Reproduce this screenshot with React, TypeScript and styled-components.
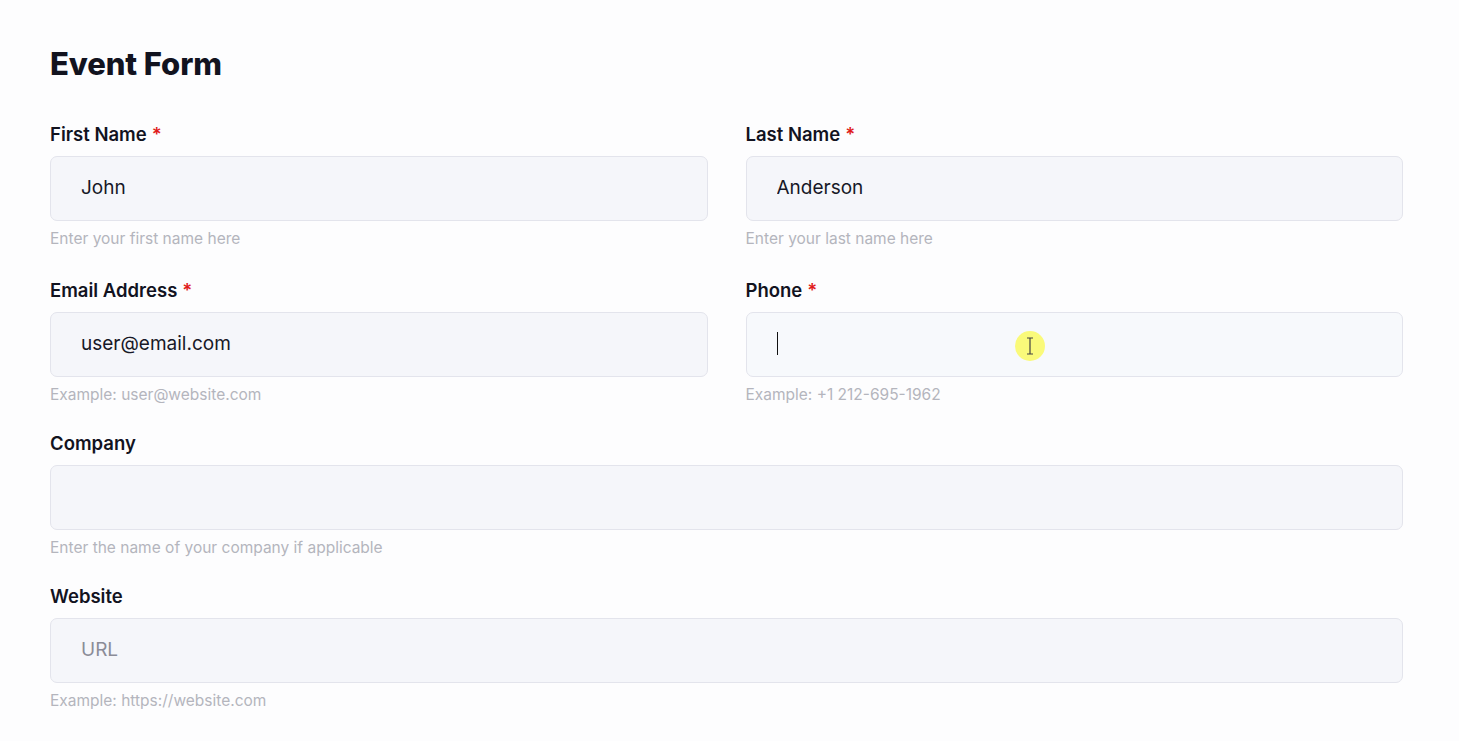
import React from 'react';
import styled, { createGlobalStyle } from 'styled-components';

const GlobalStyle = createGlobalStyle`
  html, body {
    margin: 0;
    padding: 0;
    background: #fdfdfe;
  }
  * {
    box-sizing: border-box;
  }
`;

const Page = styled.div`
  font-family: Inter, 'Noto Sans', sans-serif;
  padding: 46px 56px 30px 50px;
  color: #12131f;
  position: relative;
`;

const Title = styled.h1`
  font-size: 31px;
  line-height: 36px;
  font-weight: 800;
  margin: 0 0 40px;
  letter-spacing: -0.1px;
`;

const Grid = styled.div`
  display: grid;
  grid-template-columns: 1fr 1fr;
  column-gap: 38px;
  row-gap: 26px;
`;

const Field = styled.div<{ $wide?: boolean; $first?: boolean }>`
  display: flex;
  flex-direction: column;
  grid-column: ${(p) => (p.$wide ? '1 / -1' : 'auto')};
  padding-bottom: ${(p) => (p.$first ? '3px' : '0')};
`;

const Label = styled.label`
  font-size: 18.5px;
  line-height: 24px;
  font-weight: 600;
  margin-bottom: 10px;
`;

const Star = styled.span`
  color: #e01b1b;
  margin-left: 5px;
`;

const InputBox = styled.div<{ $focused?: boolean }>`
  position: relative;
  height: 65px;
  border: 1px solid #e3e4ec;
  border-radius: 7px;
  background: ${(p) => (p.$focused ? '#f7f9fc' : '#f5f6fa')};
  display: flex;
  align-items: center;
  padding: 0 30px;
`;

const Input = styled.input`
  border: none;
  outline: none;
  background: transparent;
  width: 100%;
  font-family: inherit;
  font-size: 19px;
  color: #171827;
  padding: 0;
  margin-top: -2px;

  &::placeholder {
    color: #8b8c97;
  }
`;

const Caret = styled.span`
  display: block;
  width: 1.5px;
  height: 23px;
  background: #111;
  margin-top: -2px;
`;

const Help = styled.div`
  font-size: 15.5px;
  line-height: 20px;
  color: #b4b5bd;
  margin-top: 8px;
`;

const Pointer = styled.div`
  position: absolute;
  left: 1015px;
  top: 331px;
  width: 30px;
  height: 30px;
  border-radius: 50%;
  background: #fafa7a;
  display: flex;
  align-items: center;
  justify-content: center;
`;

type FieldDef = {
  label: string;
  required?: boolean;
  value?: string;
  placeholder?: string;
  help: string;
  wide?: boolean;
  focused?: boolean;
  first?: boolean;
};

const fields: FieldDef[] = [
  { label: 'First Name', required: true, value: 'John', help: 'Enter your first name here', first: true },
  { label: 'Last Name', required: true, value: 'Anderson', help: 'Enter your last name here', first: true },
  { label: 'Email Address', required: true, value: 'user@email.com', help: 'Example: user@website.com' },
  { label: 'Phone', required: true, focused: true, help: 'Example: +1 212-695-1962' },
  { label: 'Company', wide: true, help: 'Enter the name of your company if applicable' },
  { label: 'Website', wide: true, placeholder: 'URL', help: 'Example: https://website.com' },
];

const App = () => {
  return (
    <Page>
      <GlobalStyle />
      <Title>Event Form</Title>
      <Grid>
        {fields.map((f) => (
          <Field key={f.label} $wide={f.wide} $first={f.first}>
            <Label>
              {f.label}
              {f.required && <Star>*</Star>}
            </Label>
            <InputBox $focused={f.focused}>
              {f.focused ? (
                <Caret />
              ) : (
                <Input readOnly value={f.value ?? ''} placeholder={f.placeholder} />
              )}
            </InputBox>
            <Help>{f.help}</Help>
          </Field>
        ))}
      </Grid>
      <Pointer>
        <svg width="10" height="18" viewBox="0 0 10 18" fill="none" stroke="#444" strokeWidth="1.2">
          <path d="M2 1h6M5 1v16M2 17h6" />
        </svg>
      </Pointer>
    </Page>
  );
};

export default App;
